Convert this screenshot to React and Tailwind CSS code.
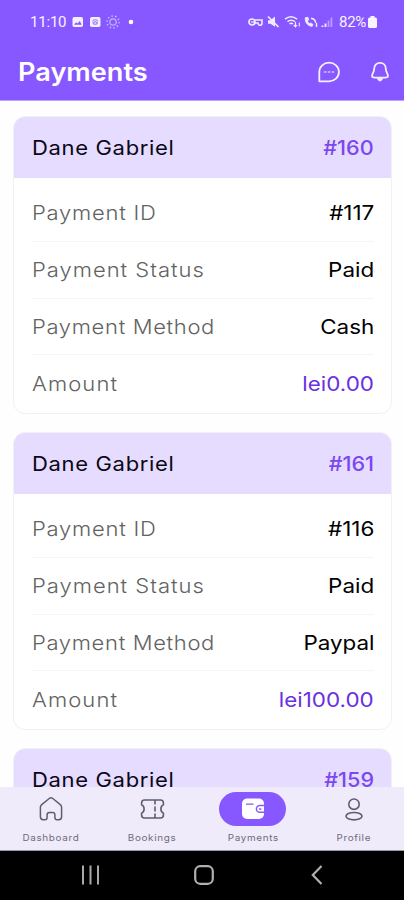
const payments = [
  {
    code: "#160",
    rows: [
      { label: "Payment ID", value: "#117" },
      { label: "Payment Status", value: "Paid" },
      { label: "Payment Method", value: "Cash" },
      { label: "Amount", value: "lei0.00" },
    ],
  },
  {
    code: "#161",
    rows: [
      { label: "Payment ID", value: "#116" },
      { label: "Payment Status", value: "Paid" },
      { label: "Payment Method", value: "Paypal" },
      { label: "Amount", value: "lei100.00" },
    ],
  },
  { code: "#159", rows: [] },
];

const labelTracking = {
  "Payment ID": "tracking-[0.7px]",
  "Payment Status": "tracking-[0.9px]",
  "Payment Method": "tracking-[0.6px]",
  Amount: "tracking-[1px]",
};

function Row({ label, value }) {
  const last = label === "Amount";
  const height = label === "Payment Method" ? "h-[56px]" : "h-[57px]";
  return (
    <div className={`flex items-center justify-between ${height} ${last ? "" : "border-b border-[#f5f5f6]"}`}>
      <span className={`origin-left scale-x-110 font-light text-[#626262] ${labelTracking[label]}`}>{label}</span>
      <span className={`origin-right scale-x-[1.12] ${last ? "text-[#6a30e2]" : "text-black"}`}>{value}</span>
    </div>
  );
}

function PaymentCard({ p }) {
  return (
    <section className="h-[298px] shrink-0 overflow-hidden rounded-[12px] border border-[#f1f1f3] bg-white text-[20px] leading-none">
      <div className="flex h-[61px] items-center justify-between bg-[#e5dcff] pl-[18px] pr-[17px]">
        <span className="origin-left scale-x-110 tracking-[0.6px] text-[#0c0814]">Dane Gabriel</span>
        <span className="origin-right scale-x-[1.08] font-medium text-[#7b48ee]">{p.code}</span>
      </div>
      <div className="pl-[17.5px] pr-[17px] pt-[7px]">
        {p.rows.map((row) => (
          <Row key={row.label} label={row.label} value={row.value} />
        ))}
      </div>
    </section>
  );
}

function LeftStatus() {
  return (
    <svg width="64" height="14" viewBox="0 0 64 14" fill="none" className="ml-[6px]">
      <rect x="0.5" y="2" width="10.5" height="10" rx="1.8" fill="#f4efff" />
      <path d="M2 9.8l2.2-2.5 1.5 1.3 2-2.7 2 3.9z" fill="#8757ff" />
      <rect x="18" y="2" width="10.5" height="10" rx="1.8" fill="#f4efff" />
      <circle cx="23.2" cy="7" r="2.9" fill="#a98aff" />
      <path d="M20.8 7.2l2.4-2.1 2.4 2.1M23.2 7v2" stroke="#f4efff" strokeWidth="0.9" />
      <circle cx="41" cy="7" r="3.2" stroke="#c9b5ff" strokeWidth="1.2" />
      <circle cx="41" cy="7" r="6" stroke="#c9b5ff" strokeWidth="1.5" strokeDasharray="1.5 2.2" />
      <circle cx="59" cy="7" r="2.3" fill="#fff" />
    </svg>
  );
}

function RightStatus() {
  return (
    <svg width="87" height="14" viewBox="0 0 87 14" fill="none" stroke="#f1ebff">
      <circle cx="4" cy="7" r="3" strokeWidth="1.7" />
      <path d="M3 7h3.5" strokeWidth="1.2" />
      <path d="M7 5h7v3.2c0 1.300-.8 2-2 2s-1.800-.8-2-2.200H7" strokeWidth="1.6" />
      <path d="M20 5.2h2.4L27 1.5v10.2L22.5 8.7H20z" fill="#f1ebff" stroke="none" />
      <path d="M20 1.5L30.5 12" strokeWidth="1.700" />
      <path d="M37 4.2c3.7-3 8.3-3 12 0M39.500 6.7c2.5-2 5-2 7.500 0M41.500 9c1.3-1 2.3-1 3.500 0" strokeWidth="1.500" />
      <path d="M47.5 7v4.5M45.8 10l1.7 1.8L49 10M51.3 11.5V7.5" strokeWidth="1.100" />
      <path d="M57.3 2.600c-.7 4.7 2.2 8.4 6.8 8.9l1-2-2.3-1.6-1.3.7c-1.2-.8-1.7-1.7-1.9-2.8l1.2-1-.8-2.5z" fill="#f1ebff" strokeWidth=".7" />
      <path d="M63 3.2c2.7.3 4.3 2 4.7 4.6M68.500 8v4" strokeWidth="1.4" />
      <path d="M74.5 10.5V12M77.5 8.5V12" strokeWidth="1.9" />
      <path d="M80.5 5.5V12M83.4 2.5V12" stroke="#b99dff" strokeWidth="1.8" />
    </svg>
  );
}

function ChatIcon() {
  return (
    <svg width="24" height="24" viewBox="0 0 24 24" fill="none" stroke="#f5f0ff" strokeWidth="1.8" strokeLinejoin="round">
      <path d="M2.300 21.300V12A9.800 9.300 0 1 1 12.100 21.300z" />
      <path d="M7.400 12h1.400M11.300 12h1.400M15.200 12h1.400" strokeLinecap="round" strokeWidth="1.6" opacity=".7" />
    </svg>
  );
}

function BellIcon() {
  return (
    <svg width="20" height="22" viewBox="0 0 20 22" fill="none" stroke="#f5f0ff" strokeWidth="1.8" strokeLinejoin="round">
      <path d="M10 1.900c-3.600 0-5.800 2.500-5.800 5.800 0 3.400-2.200 5.300-2.200 7.100 0 1.300 1 1.800 2.700 1.800h10.600c1.700 0 2.700-.5 2.700-1.800 0-1.800-2.200-3.700-2.200-7.100 0-3.300-2.200-5.800-5.800-5.800z" />
      <path d="M7.400 17.400c.5 1.700 1.400 2.500 2.600 2.500s2.100-.8 2.600-2.500z" fill="#f5f0ff" strokeWidth=".8" />
    </svg>
  );
}

function HomeIcon() {
  return (
    <svg width="24" height="24" viewBox="0 0 24 24" fill="none" stroke="#5f5d70" strokeWidth="1.5" strokeLinejoin="round">
      <path d="M1.400 10.300c0-1.200.4-2 1.300-2.700l7.500-6.100c1.100-.8 2.500-.8 3.600 0l7.500 6.100c.9.7 1.300 1.500 1.300 2.700v9.500c0 1.900-1 2.900-2.800 2.900h-1.600c-1.500 0-2.300-.8-2.300-2.300v-2.600c0-1.500-.8-2.300-2.300-2.300h-3.200c-1.500 0-2.300.8-2.300 2.300v2.600c0 1.500-.8 2.300-2.300 2.300H4.200c-1.800 0-2.800-1-2.800-2.900z" />
    </svg>
  );
}

function TicketIcon() {
  return (
    <svg width="25" height="20" viewBox="0 0 25 20" fill="none" stroke="#5f5d70" strokeWidth="1.6" strokeLinejoin="round">
      <path d="M4.500 1h16c2 0 2.900 1 2.900 3v1.800c-1.700.8-2.500 2.200-2.500 4.200s.8 3.400 2.500 4.200V16c0 2-.9 3-2.900 3h-16c-2 0-2.900-1-2.900-3v-1.800C3.300 13.400 4.100 12 4.100 10S3.300 6.600 1.600 5.800V4c0-2 .9-3 2.900-3z" />
      <path d="M15 1v4.500M15 7.500v5M15 14.500V19" />
    </svg>
  );
}

function WalletIcon() {
  return (
    <svg width="24" height="22" viewBox="0 0 24 22" fill="none">
      <rect x="1" y="0.5" width="22" height="20.5" rx="5" fill="#fff" />
      <path d="M5.500 6.200h6.500" stroke="#8757ff" strokeWidth="1.300" strokeLinecap="round" />
      <path d="M23 7.500h-4.200a3.400 3.400 0 0 0 0 6.800H23" fill="#fff" stroke="#8757ff" strokeWidth="1.500" />
      <path d="M18.500 10.900h1.300" stroke="#8757ff" strokeWidth="1.500" strokeLinecap="round" />
    </svg>
  );
}

function ProfileIcon() {
  return (
    <svg width="18" height="23" viewBox="0 0 18 23" fill="none" stroke="#5f5d70" strokeWidth="1.6">
      <circle cx="9" cy="6.2" r="5.200" />
      <ellipse cx="9" cy="18.200" rx="8" ry="3.700" />
    </svg>
  );
}

const tabs = [
  { name: "Dashboard", Icon: HomeIcon },
  { name: "Bookings", Icon: TicketIcon },
  { name: "Payments", Icon: WalletIcon, active: true },
  { name: "Profile", Icon: ProfileIcon },
];

export default function App() {
  return (
    <div className="flex h-[900px] w-[404px] flex-col overflow-hidden bg-[#fefefe] font-['Inter',sans-serif]">
      <header className="h-[101px] shrink-0 border-b border-[#bca2ff] bg-[#8757ff]">
        <div className="flex h-[44px] items-center justify-between pl-[30px] pr-[27px] font-['Roboto',sans-serif] text-[15px] text-[#f7f3ff]">
          <div className="flex items-center">
            <span className="w-[36px] whitespace-nowrap tracking-[-0.2px]">11:10</span>
            <LeftStatus />
          </div>
          <div className="flex items-center">
            <RightStatus />
            <span className="ml-[4px] tracking-[-0.3px]">82%</span>
            <svg width="9" height="12" viewBox="0 0 9 12" fill="#f7f3ff" className="ml-[2px]">
              <path d="M2.500 0h4v1.500h1A1.500 1.500 0 0 1 9 3v7.500A1.500 1.500 0 0 1 7.500 12h-6A1.500 1.500 0 0 1 0 10.500V3a1.500 1.500 0 0 1 1.500-1.500h1z" />
            </svg>
          </div>
        </div>
        <div className="flex h-[56px] items-center justify-between pl-[17.5px] pr-[14px]">
          <h1 className="origin-left scale-x-[1.085] text-[25px] font-semibold leading-none text-white">Payments</h1>
          <div className="flex items-center gap-[29px]">
            <ChatIcon />
            <BellIcon />
          </div>
        </div>
      </header>

      <main className="flex min-h-0 flex-1 flex-col gap-[18px] overflow-hidden pl-[13px] pr-[12px] pt-[15px]">
        {payments.map((p) => (
          <PaymentCard key={p.code} p={p} />
        ))}
      </main>

      <nav className="grid h-[64px] shrink-0 grid-cols-4 border-b border-[#9b98a8] bg-[#efebfa] pl-[1px]">
        {tabs.map(({ name, Icon, active }) => (
          <div key={name} className="flex flex-col items-center pt-[5px]">
            <div className={`flex h-[34px] w-[67px] items-center justify-center rounded-full ${active ? "bg-[#8757ff]" : ""}`}>
              <Icon />
            </div>
            <span className="mt-[6px] scale-x-110 text-[9px] leading-[11px] tracking-[0.6px] text-[#6f6c7d]">{name}</span>
          </div>
        ))}
      </nav>

      <footer className="grid h-[49px] shrink-0 grid-cols-[19px_20px_12px] items-center gap-x-[94px] bg-black pb-[1px] pl-[81px]">
        <svg width="19" height="20" viewBox="0 0 19 20" stroke="#a9a9a9" strokeWidth="2">
          <path d="M2 0.500v19M9.500 0.500v19M17 0.500v19" />
        </svg>
        <svg width="20" height="20" viewBox="0 0 20 20" fill="none" stroke="#b0b0b0" strokeWidth="2.200">
          <rect x="1.200" y="1.200" width="17.600" height="17.600" rx="5" />
        </svg>
        <svg width="12" height="20" viewBox="0 0 12 20" fill="none" stroke="#b0b0b0" strokeWidth="2.200" className="ml-[3px]">
          <path d="M10.500 1L1.800 10l8.700 9" />
        </svg>
      </footer>
    </div>
  );
}
